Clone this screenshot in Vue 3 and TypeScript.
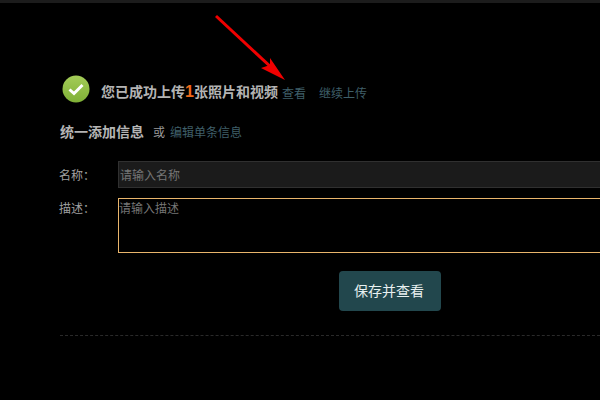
<script setup lang="ts">
const zh = {
  count: 1,
}
</script>

<template>
  <div class="page">
    <div class="topbar"></div>
    <section class="content">
      <div class="status">
        <svg class="check" width="28" height="28" viewBox="0 0 28 28">
          <defs>
            <linearGradient id="g" x1="0" y1="0" x2="0" y2="1">
              <stop offset="0" stop-color="#a4cc58" />
              <stop offset="1" stop-color="#7fb036" />
            </linearGradient>
          </defs>
          <circle cx="14" cy="14" r="13.5" fill="url(#g)" />
          <path d="M7.5 14.5 L12 18.5 L20.5 10" fill="none" stroke="#fff" stroke-width="3" />
        </svg>
        <span class="msg">您已成功上传<b class="num">{{ zh.count }}</b>张照片和视频</span>
        <a class="link view">查看</a>
        <a class="link more">继续上传</a>
      </div>
      <div class="sub">
        <span class="sub-title">统一添加信息</span>
        <span class="or">或</span>
        <a class="link">编辑单条信息</a>
      </div>
      <div class="form">
        <label class="lbl">名称：</label>
        <input class="name" placeholder="请输入名称" />
        <label class="lbl lbl2">描述：</label>
        <textarea class="desc" placeholder="请输入描述"></textarea>
      </div>
      <div class="actions"><button class="save">保存并查看</button></div>
      <div class="rule"></div>
    </section>
    <svg class="arrow" width="600" height="100" viewBox="0 0 600 100">
      <path d="M216 16 L273 69" stroke="#f00000" stroke-width="3" fill="none" />
      <path d="M285 80 L261 68 L270 65 L270 58 Z" fill="#f00000" />
    </svg>
  </div>
</template>

<style scoped>
.page {
  position: relative;
  width: 600px;
  height: 400px;
  overflow: hidden;
  background: #000;
  font-family: "Liberation Sans", "Noto Sans CJK SC", sans-serif;
  font-size: 12px;
  color: #aaa;
}
.topbar {
  height: 3px;
  background: #1c1c1c;
}
.content {
  padding: 72px 0 0 62px;
}
.status {
  display: flex;
  align-items: center;
  height: 28px;
}
.check {
  flex: none;
}
.msg {
  margin-left: 11px;
  margin-top: 4px;
  font-size: 14px;
  font-weight: 700;
  color: #b4b4b4;
}
.num {
  color: #f06a1a;
  font-size: 16px;
}
.link {
  color: #3f5f69;
}
.view {
  margin-left: 4px;
  margin-top: 7px;
}
.more {
  margin-left: 13px;
  margin-top: 7px;
}
.sub {
  display: flex;
  align-items: center;
  margin: 19px 0 0 -2px;
  height: 18px;
}
.sub-title {
  font-size: 14px;
  font-weight: 700;
  color: #b4b4b4;
}
.or {
  margin: 0 5px 0 9px;
  color: #999;
}
.form {
  display: grid;
  grid-template-columns: 59px 600px;
  row-gap: 10px;
  margin: 21px 0 0 -3px;
}
.lbl {
  padding-top: 3px;
  line-height: 24px;
  color: #a0a0a0;
}
.lbl2 {
  padding-top: 0;
  line-height: 22px;
}
.name,
.desc {
  box-sizing: border-box;
  margin: 0;
  outline: none;
  font-family: inherit;
  font-size: 12px;
  color: #aaa;
}
.name {
  height: 27px;
  padding: 3px 1px 0;
  background: #1b1b1b;
  border: 1px solid #303030;
}
.desc {
  display: block;
  height: 55px;
  padding: 2px 0 0;
  resize: none;
  background: #000;
  border: 1px solid #e9b56c;
  line-height: 16px;
}
.name::placeholder,
.desc::placeholder {
  color: #757575;
}
.actions {
  margin: 18px 0 0 277px;
}
.save {
  display: block;
  width: 102px;
  height: 40px;
  padding: 0 2px 2px 0;
  border: 0;
  border-radius: 4px;
  background: #22474d;
  color: #e8f0f0;
  font-family: inherit;
  font-size: 14px;
}
.rule {
  margin: 24px 0 0 -2px;
  border-top: 1px dashed #2a2a2a;
}
.arrow {
  position: absolute;
  left: 0;
  top: 0;
  pointer-events: none;
}
</style>
